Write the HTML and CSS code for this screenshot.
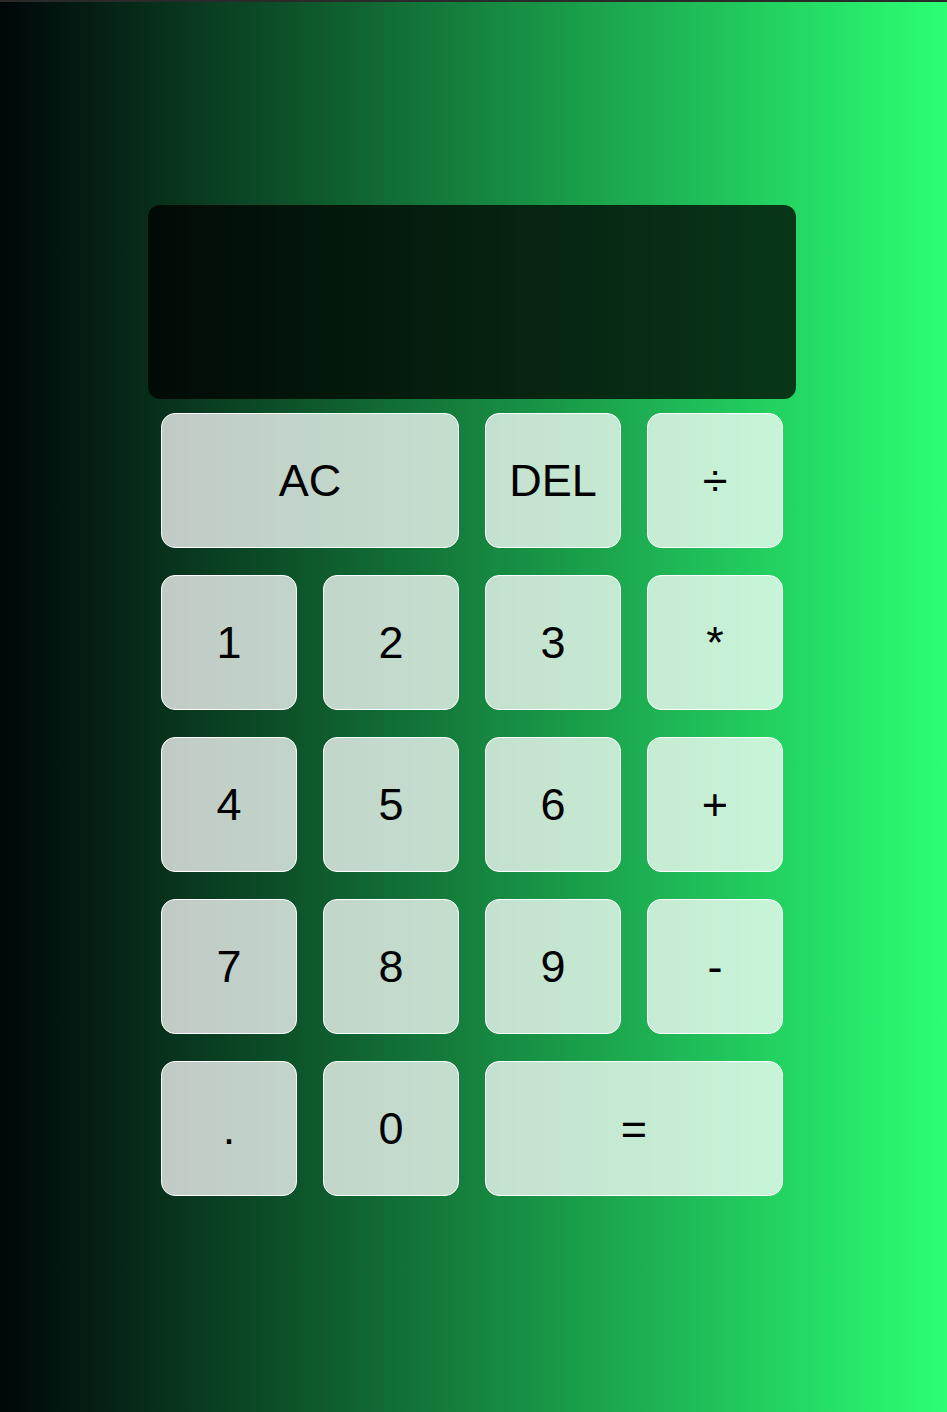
FILE: index.html
```html
<!DOCTYPE html>
<html lang="en">
<head>
<meta charset="UTF-8">
<title>Calculator</title>
<link rel="stylesheet" href="styles.css">
</head>
<body>
<div class="calculator">
  <div class="display"></div>
  <div class="keys">
    <button class="key span-two">AC</button>
    <button class="key">DEL</button>
    <button class="key">÷</button>
    <button class="key">1</button>
    <button class="key">2</button>
    <button class="key">3</button>
    <button class="key">*</button>
    <button class="key">4</button>
    <button class="key">5</button>
    <button class="key">6</button>
    <button class="key">+</button>
    <button class="key">7</button>
    <button class="key">8</button>
    <button class="key">9</button>
    <button class="key">-</button>
    <button class="key">.</button>
    <button class="key">0</button>
    <button class="key span-two">=</button>
  </div>
</div>
</body>
</html>
```
FILE: styles.css
```css
* {
  box-sizing: border-box;
}

html, body {
  margin: 0;
  padding: 0;
}

body {
  min-height: 100vh;
  border-top: 2px solid #2a2a2a;
  background: linear-gradient(to right, #000609, #2bff74);
  font-family: "Liberation Sans", Arial, sans-serif;
  display: flex;
  justify-content: center;
  align-items: flex-start;
  padding-right: 3px;
}

.calculator {
  width: 648px;
  margin-top: 203px;
  display: flex;
  flex-direction: column;
  gap: 14px;
}

.display {
  height: 194px;
  border-radius: 12px;
  background: rgba(0, 0, 0, 0.75);
}

.keys {
  display: grid;
  grid-template-columns: repeat(4, 136px);
  grid-auto-rows: 135px;
  column-gap: 26px;
  row-gap: 27px;
  justify-content: start;
  padding: 0 13px;
}

.key {
  font-family: "Liberation Sans", Arial, sans-serif;
  font-size: 45px;
  color: #000;
  background: rgba(255, 255, 255, 0.75);
  border: 1.5px solid #ffffff;
  border-radius: 14px;
  padding: 0;
  cursor: pointer;
  display: flex;
  align-items: center;
  justify-content: center;
}

.span-two {
  grid-column: span 2;
}
```
